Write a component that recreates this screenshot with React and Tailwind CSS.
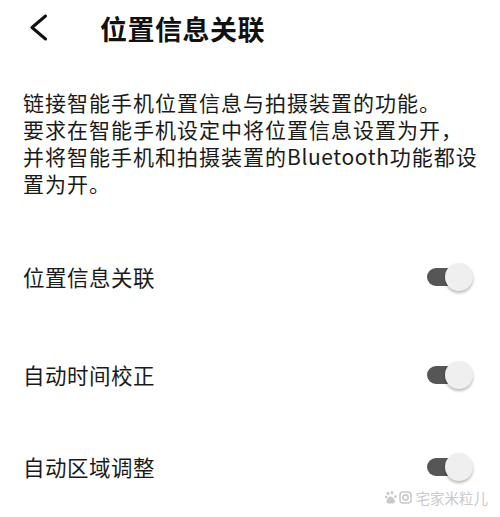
import React from "react";

const Toggle = () => (
  <div className="relative w-[46px] h-[30px] shrink-0">
    <div className="absolute left-0 top-[6px] w-[32px] h-[18px] rounded-full bg-[#565656]" />
    <div className="absolute right-0 top-[1px] w-[28px] h-[28px] rounded-full bg-[#efefef] shadow-[0_2px_3px_rgba(0,0,0,0.28)]" />
  </div>
);

const Row = ({ label, className }) => (
  <div className={`flex items-center justify-between pl-[23px] pr-[27px] ${className}`}>
    <span className="text-[21.5px] tracking-[0.5px] text-[#1a1a1a]">{label}</span>
    <Toggle />
  </div>
);

const Watermark = () => (
  <div className="absolute right-[12px] bottom-[12px] flex items-center gap-[2px] text-[#c9c9c9]">
    <svg width="12" height="13" viewBox="0 0 12 13" fill="currentColor">
      <ellipse cx="3" cy="2.5" rx="1.4" ry="1.8" />
      <ellipse cx="7" cy="1.8" rx="1.4" ry="1.8" />
      <ellipse cx="1.2" cy="6" rx="1.2" ry="1.5" />
      <ellipse cx="10.4" cy="5.4" rx="1.2" ry="1.5" />
      <path d="M5.5 5.5c-2 0-4 3.2-4 5 0 1.4 1.2 2 2.4 2h3.4c1.3 0 2.6-.6 2.6-2 0-1.8-2.200-5-4.4-5z" />
    </svg>
    <svg width="13" height="13" viewBox="0 0 13 13" fill="none" stroke="currentColor" strokeWidth="1.6">
      <rect x="1" y="1" width="11" height="11" rx="3" />
      <circle cx="6.5" cy="6.5" r="2.6" />
    </svg>
    <span className="text-[14.5px] leading-none ml-[2px]">宅家米粒儿</span>
  </div>
);

export default function App() {
  return (
    <div
      className="relative w-[500px] h-[517px] bg-white overflow-hidden text-[#111]"
      style={{ fontFamily: '"Noto Sans CJK SC", "Noto Sans", sans-serif' }}
    >
      <header className="flex items-center h-[56px]">
        <div className="w-[100px] flex items-center pl-[29px]">
          <svg width="20" height="28" viewBox="0 0 20 28" fill="none" stroke="#111" strokeWidth="3" strokeLinecap="round" strokeLinejoin="round">
            <path d="M16.5 2L3 13.5 16.5 25" />
          </svg>
        </div>
        <h1 className="text-[27px] font-bold tracking-[0.5px] leading-none">位置信息关联</h1>
      </header>

      <p className="mt-[33px] pl-[23px] text-[21px] leading-[27px] tracking-[1px] text-[#1a1a1a] whitespace-nowrap">
        链接智能手机位置信息与拍摄装置的功能。
        <br />
        要求在智能手机设定中将位置信息设置为开，
        <br />
        并将智能手机和拍摄装置的<span className="tracking-[0.6px]">Bluetooth</span>功能都设
        <br />
        置为开。
      </p>

      <div className="mt-[32px]">
        <Row label="位置信息关联" className="h-[96px]" />
        <Row label="自动时间校正" className="h-[100px]" />
        <Row label="自动区域调整" className="h-[84px]" />
      </div>

      <Watermark />
    </div>
  );
}
